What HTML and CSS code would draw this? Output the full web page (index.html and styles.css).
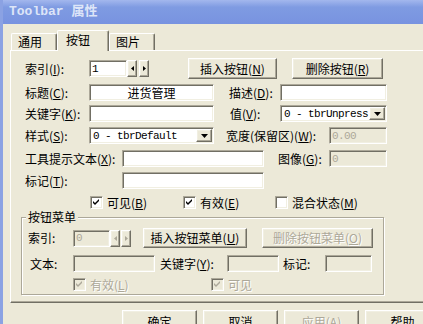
FILE: index.html
```html
<!DOCTYPE html>
<html lang="zh-CN">
<head>
    <meta charset="UTF-8">
    <title>Toolbar 属性</title>
    <link rel="stylesheet" href="styles.css">
</head>
<body>

<div class="window">
    <div class="titlebar">Toolbar 属性</div>
    <div class="client">
        <div class="tabs">
            <div class="tab tab-side">通用</div>
            <div class="tab tab-active">按钮</div>
            <div class="tab tab-side">图片</div>
        </div>

        <div class="panel">
            <div class="row row-1">
                <label class="lbl w64">索引(<u>I</u>):</label>
                <input class="field mono w38" value="1">
                <span class="btn spin-btn"><svg width="3" height="5" viewBox="0 0 3 5"><path d="M3 0V5L0 2.5Z"/></svg></span>
                <span class="btn spin-btn spin-next"><svg width="3" height="5" viewBox="0 0 3 5"><path d="M0 0V5L3 2.5Z"/></svg></span>
                <button class="btn push btn-insert">插入按钮(<u>N</u>)</button>
                <button class="btn push btn-remove">删除按钮(<u>R</u>)</button>
            </div>

            <div class="row row-2">
                <label class="lbl w64">标题(<u>C</u>):</label>
                <input class="field w125 centered" value="进货管理">
                <label class="lbl lbl-desc">描述(<u>D</u>):</label>
                <input class="field w107" value="">
            </div>

            <div class="row row-3">
                <label class="lbl w64">关键字(<u>K</u>):</label>
                <input class="field w125" value="">
                <label class="lbl lbl-value">值(<u>V</u>):</label>
                <div class="field combo w107">
                    <span class="combo-text mono">0 - tbrUnpress</span>
                    <span class="btn drop"><svg width="7" height="4" viewBox="0 0 7 4"><path d="M0 0H7L3.5 4Z"/></svg></span>
                </div>
            </div>

            <div class="row row-4">
                <label class="lbl w64">样式(<u>S</u>):</label>
                <div class="field combo w125">
                    <span class="combo-text mono">0 - tbrDefault</span>
                    <span class="btn drop"><svg width="7" height="4" viewBox="0 0 7 4"><path d="M0 0H7L3.5 4Z"/></svg></span>
                </div>
                <label class="lbl lbl-width">宽度(保留区)(<u>W</u>):</label>
                <input class="field mono off w58" value="0.00" disabled>
            </div>

            <div class="row row-5">
                <label class="lbl w97">工具提示文本(<u>X</u>):</label>
                <input class="field w142" value="">
                <label class="lbl lbl-image">图像(<u>G</u>):</label>
                <input class="field mono off w58" value="0" disabled>
            </div>

            <div class="row row-6">
                <label class="lbl w97">标记(<u>T</u>):</label>
                <input class="field w142" value="">
            </div>

            <div class="row row-7">
                <label class="check check-visible"><span class="box"><svg width="7" height="7" viewBox="0 0 7 7"><path d="M0 2L2 4L6 0V2L2 6L0 4Z"/></svg></span>可见(<u>B</u>)</label>
                <label class="check check-enabled"><span class="box"><svg width="7" height="7" viewBox="0 0 7 7"><path d="M0 2L2 4L6 0V2L2 6L0 4Z"/></svg></span>有效(<u>E</u>)</label>
                <label class="check"><span class="box"></span>混合状态(<u>M</u>)</label>
            </div>

            <fieldset class="group">
                <legend>按钮菜单</legend>
                <div class="row row-a">
                    <label class="lbl w45">索引:</label>
                    <input class="field mono off w37" value="0" disabled>
                    <span class="btn spin-btn off"><svg width="3" height="5" viewBox="0 0 3 5"><path d="M3 0V5L0 2.5Z"/></svg></span>
                    <span class="btn spin-btn off spin-gap"><svg width="3" height="5" viewBox="0 0 3 5"><path d="M0 0V5L3 2.5Z"/></svg></span>
                    <button class="btn push btn-menu-insert">插入按钮菜单(<u>U</u>)</button>
                    <button class="btn push btn-menu-remove off" disabled>删除按钮菜单(<u>O</u>)</button>
                </div>
                <div class="row row-b">
                    <label class="lbl w45 lbl-text">文本:</label>
                    <input class="field off w82" value="" disabled>
                    <label class="lbl lbl-key">关键字(<u>Y</u>):</label>
                    <input class="field off w52" value="" disabled>
                    <label class="lbl lbl-tag">标记:</label>
                    <input class="field off w47" value="" disabled>
                </div>
                <div class="row row-c">
                    <label class="check off check-menu"><span class="box"><svg width="7" height="7" viewBox="0 0 7 7"><path d="M0 2L2 4L6 0V2L2 6L0 4Z"/></svg></span>有效(<u>L</u>)</label>
                    <label class="check off"><span class="box"><svg width="7" height="7" viewBox="0 0 7 7"><path d="M0 2L2 4L6 0V2L2 6L0 4Z"/></svg></span>可见</label>
                </div>
            </fieldset>
        </div>

        <div class="actions">
            <button class="btn push action">确定</button>
            <button class="btn push action">取消</button>
            <button class="btn push action off" disabled>应用(<u>A</u>)</button>
            <button class="btn push action">帮助</button>
        </div>
    </div>
</div>

</body>
</html>
```

FILE: styles.css
```css
* {
    box-sizing: border-box;
}
body {
    margin: 0;
    width: 423px;
    height: 324px;
    overflow: hidden;
    background-color: #ECE9D8;
    font-family: "Noto Sans CJK SC", sans-serif;
    font-size: 12px;
    line-height: 14px;
    color: #000;
}
u {
    text-decoration: underline;
    text-underline-offset: 1px;
}
.window {
    height: 324px;
    border-left: 3px solid #8ba2e3;
}
.titlebar {
    height: 24px;
    padding-left: 6px;
    background: linear-gradient(#a3b7ed, #7f9be2 30%, #7893e0);
    color: #dde5f8;
    font: bold 13px/24px "Liberation Mono", "Noto Sans CJK SC", monospace;
}
.client {
    padding: 6px 0 0 7px;
}

/* tabs */
.tabs {
    display: flex;
    align-items: flex-end;
    height: 20px;
    padding-left: 1px;
}
.tab {
    height: 17px;
    padding-left: 6px;
    border: 1px solid #fff;
    border-right-color: #716F64;
    border-bottom: none;
    border-radius: 2px 2px 0 0;
    box-shadow: inset -1px 0 #ACA899;
    line-height: 15px;
}
.tab-side {
    width: 46px;
}
.tab-active {
    position: relative;
    z-index: 1;
    width: 52px;
    height: 21px;
    margin-bottom: -1px;
    padding-left: 8px;
    background-color: #ECE9D8;
    line-height: 17px;
}
.panel {
    width: 430px;
    height: 253px;
    padding-left: 10px;
    border-top: 1px solid #fff;
    border-left: 1px solid #fff;
    border-bottom: 1px solid #716F64;
    box-shadow: inset 0 -1px #ACA899;
}

/* rows */
.row {
    display: flex;
    align-items: center;
    height: 17px;
    padding-left: 4px;
}
.row-1 { margin-top: 7px; height: 21px; }
.row-2 { margin-top: 5px; }
.row-3 { margin-top: 4px; }
.row-4 { margin-top: 5px; }
.row-5 { margin-top: 6px; }
.row-6 { margin-top: 5px; }
.row-7 { margin-top: 7px; height: 13px; }

.lbl {
    flex: none;
    white-space: nowrap;
}
.w64 { width: 64px; }
.w97 { width: 97px; }
.w45 { width: 45px; }
.lbl-desc { margin-left: 15px; width: 51px; }
.lbl-value { margin-left: 16px; width: 50px; }
.lbl-width { margin-left: 12px; width: 103px; }
.lbl-image { margin-left: 14px; width: 51px; }
.lbl-text { padding-left: 2px; }
.lbl-key { margin-left: 5px; width: 67px; }
.lbl-tag { margin-left: 4px; width: 42px; }

/* sunken fields */
.field {
    flex: none;
    height: 17px;
    margin: 0;
    padding: 0 2px;
    border: 1px solid;
    border-color: #ACA899 #fff #fff #ACA899;
    box-shadow: inset 1px 1px #716F64, inset -1px -1px #F1EFE2;
    background-color: #fff;
    color: #000;
    font-family: "Noto Sans CJK SC", sans-serif;
    font-size: 12px;
    outline: none;
}
.field.off {
    background-color: #ECE9D8;
    color: #ACA899;
}
.mono {
    font-family: "Liberation Mono", monospace;
    font-size: 11px;
    letter-spacing: -0.6px;
}
.centered {
    text-align: center;
}
.w37 { width: 37px; }
.w38 { width: 38px; }
.w47 { width: 47px; }
.w52 { width: 52px; }
.w58 { width: 58px; }
.w82 { width: 82px; }
.w107 { width: 107px; }
.w125 { width: 125px; }
.w142 { width: 142px; }

.combo {
    display: flex;
    align-items: center;
    padding: 1px;
}
.combo-text {
    flex: 1;
    padding-left: 2px;
    white-space: nowrap;
    overflow: hidden;
}
.drop {
    width: 16px;
    height: 13px;
}

/* raised buttons */
.btn {
    display: flex;
    align-items: center;
    justify-content: center;
    flex: none;
    margin: 0;
    padding: 0;
    border: 1px solid;
    border-color: #fff #716F64 #716F64 #fff;
    box-shadow: inset -1px -1px #ACA899, inset 1px 1px #F1EFE2;
    background-color: #ECE9D8;
    color: #000;
    font-family: "Noto Sans CJK SC", sans-serif;
    font-size: 12px;
    line-height: 14px;
}
.btn.off,
.check.off {
    color: #ACA899;
    text-shadow: 1px 1px #fff;
}
.btn svg {
    fill: #000;
}
.btn.off svg {
    fill: #ACA899;
}
.spin-btn {
    width: 10px;
    height: 17px;
}
.spin-next { margin-left: 2px; }
.spin-gap { margin-left: 1px; }
.push { height: 21px; }
.btn-insert { margin-left: 39px; width: 89px; }
.btn-remove { margin-left: 15px; width: 91px; }

/* checkboxes */
.check {
    display: flex;
    align-items: center;
    flex: none;
    white-space: nowrap;
}
.check-visible { margin-left: 65px; width: 93px; }
.check-enabled { width: 92px; }
.box {
    display: flex;
    align-items: center;
    justify-content: center;
    width: 13px;
    height: 13px;
    margin-right: 4px;
    border: 1px solid;
    border-color: #ACA899 #fff #fff #ACA899;
    box-shadow: inset 1px 1px #716F64, inset -1px -1px #F1EFE2;
    background-color: #fff;
}
.box svg {
    fill: #000;
}
.check.off .box {
    background-color: #ECE9D8;
}
.check.off .box svg {
    fill: #ACA899;
}

/* button menu group */
.group {
    width: 363px;
    min-width: 0;
    margin: 1px 0 0 0;
    padding: 0 0 3px 0;
    border: 1px solid #ACA899;
    box-shadow: inset 1px 1px #fff, 1px 1px #fff;
}
.group legend {
    margin-left: 4px;
    padding: 0 2px;
    background-color: #ECE9D8;
    line-height: 14px;
}
.group .row {
    padding-left: 6px;
}
.row-a { margin-top: 4px; height: 20px; }
.row-b { margin-top: 7px; }
.row-c { margin-top: 6px; height: 13px; }
.row-a .push { height: 20px; }
.btn-menu-insert { margin-left: 12px; width: 104px; }
.btn-menu-remove { margin-left: 15px; width: 111px; }
.check-menu { margin-left: 45px; width: 138px; }

/* dialog buttons */
.actions {
    display: flex;
    gap: 6px;
    margin-top: 7px;
    padding-left: 112px;
}
.action {
    width: 75px;
    height: 23px;
}
```
